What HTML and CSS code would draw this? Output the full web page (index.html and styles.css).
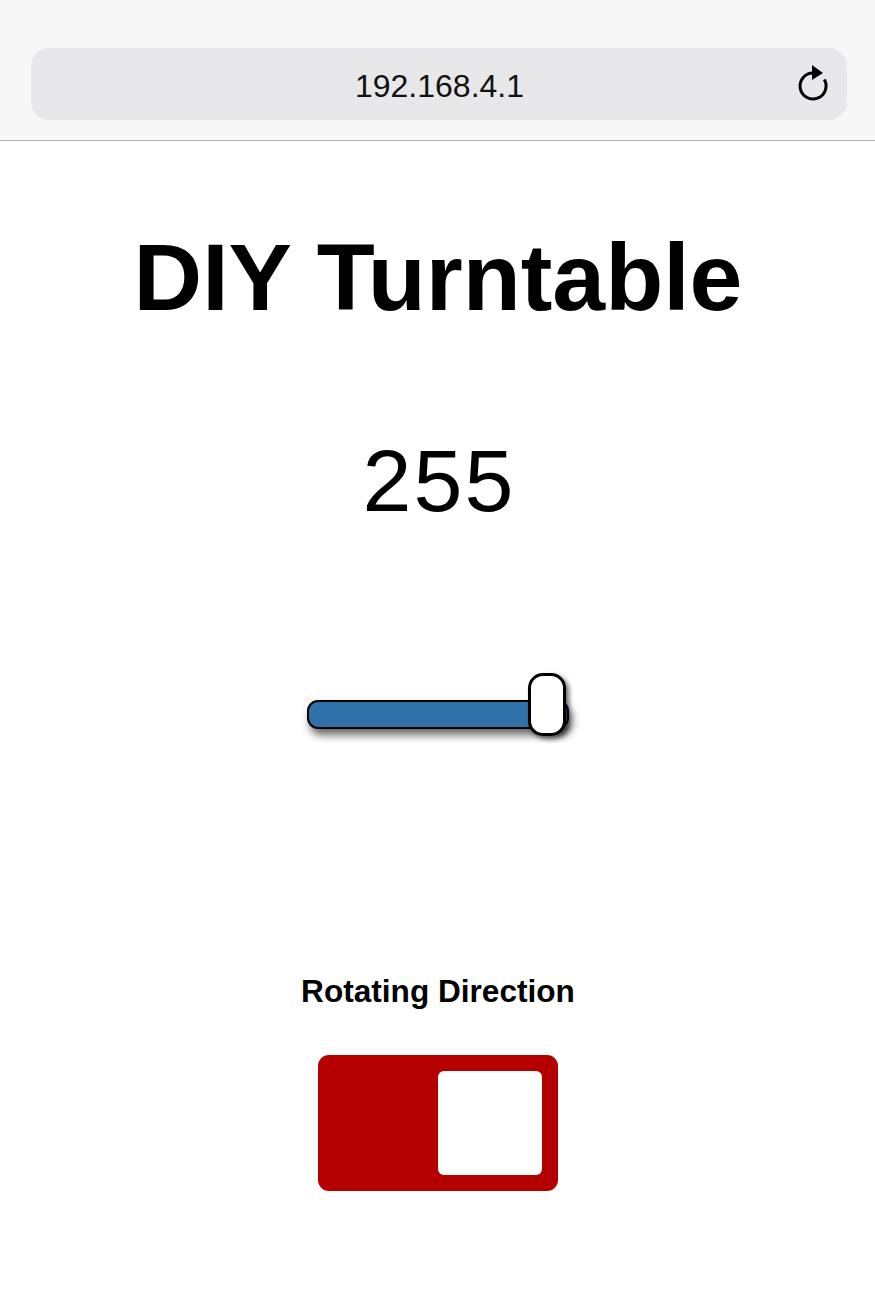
FILE: index.html
```html
<!DOCTYPE html>
<html lang="en">
<head>
<meta charset="utf-8">
<title>DIY Turntable</title>
<link rel="stylesheet" href="styles.css">
</head>
<body>
<header class="browser-bar">
  <div class="url-pill">
    <span class="url-text">192.168.4.1</span>
    <svg class="reload" width="34" height="40" viewBox="0 0 34 40" aria-hidden="true">
      <path d="M17 10 A13 13 0 1 0 28.3 16.5" fill="none" stroke="#000" stroke-width="3"/>
      <polygon points="16,2 27,10 16,17" fill="#000"/>
    </svg>
  </div>
</header>
<main class="page">
  <h1 class="title">DIY Turntable</h1>
  <div class="value">255</div>
  <div class="slider">
    <div class="track"></div>
    <div class="thumb"></div>
  </div>
  <div class="label">Rotating Direction</div>
  <div class="toggle">
    <div class="knob"></div>
  </div>
</main>
</body>
</html>
```

FILE: styles.css
```css
html, body {
  margin: 0;
  padding: 0;
  background: #ffffff;
  font-family: "Liberation Sans", Arial, Helvetica, sans-serif;
  color: #000;
}

.browser-bar {
  background: #f7f7f7;
  border-bottom: 1px solid #b4b4b4;
  padding: 48px 28px 0 31px;
  box-sizing: border-box;
  height: 141px;
}

.url-pill {
  position: relative;
  height: 72px;
  background: #e8e8ea;
  border-radius: 18px;
  display: flex;
  align-items: center;
  justify-content: center;
}

.url-text {
  font-size: 32px;
  color: #111;
  margin-top: 4px;
  margin-left: 1px;
}

.reload {
  position: absolute;
  right: 17px;
  top: 15px;
}

.page {
  display: flex;
  flex-direction: column;
  align-items: center;
  padding-left: 1px;
}

.title {
  margin: 89px 0 0 0;
  font-size: 95px;
  line-height: 95px;
  font-weight: bold;
  letter-spacing: 0;
}

.value {
  margin-top: 112px;
  font-size: 88px;
  line-height: 88px;
  letter-spacing: 2px;
  padding-left: 2px;
}

.slider {
  position: relative;
  margin-top: 148px;
  width: 262px;
  height: 63px;
}

.track {
  margin-top: 27px;
  height: 25px;
  background: #3071a9;
  border: 2px solid #000;
  border-radius: 11px;
  box-shadow: 3px 6px 8px rgba(0, 0, 0, 0.6);
}

.thumb {
  position: absolute;
  right: 3px;
  top: 0;
  width: 32px;
  height: 57px;
  background: #fff;
  border: 3px solid #000;
  border-radius: 15px;
  box-shadow: 3px 3px 5px rgba(0, 0, 0, 0.6);
}

.label {
  margin-top: 240px;
  font-size: 31.6px;
  line-height: 31px;
  font-weight: bold;
}

.toggle {
  margin-top: 48px;
  width: 240px;
  height: 136px;
  box-sizing: border-box;
  background: #b50000;
  border-radius: 11px;
  padding: 16px 16px 16px 0;
  display: flex;
  justify-content: flex-end;
}

.knob {
  width: 104px;
  height: 104px;
  background: #fff;
  border-radius: 6px;
}
```
